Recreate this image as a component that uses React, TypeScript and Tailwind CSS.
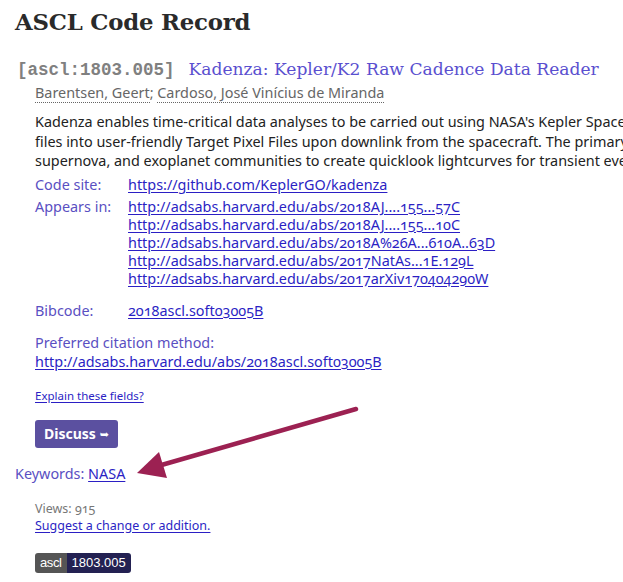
const LINKS = [
  'http://adsabs.harvard.edu/abs/2018AJ....155...57C',
  'http://adsabs.harvard.edu/abs/2018AJ....155...10C',
  'http://adsabs.harvard.edu/abs/2018A%26A...610A..63D',
  'http://adsabs.harvard.edu/abs/2017NatAs...1E.129L',
  'http://adsabs.harvard.edu/abs/2017arXiv170404290W',
];

const sans = "font-['Noto_Sans','DejaVu_Sans',sans-serif]";
const link = 'text-[#2b1fc4] underline underline-offset-2 oldstyle-nums';
const label = 'text-[#5a4fc2]';

export default function App() {
  return (
    <div className={`relative w-[623px] h-[582px] overflow-hidden bg-white ${sans} text-[14.4px] text-[#222]`}>
      <div className="pl-[15px] pt-[5px]">
        <h1 className="font-['DejaVu_Serif',serif] font-bold text-[22.8px] leading-[34px] text-[#2a2a2a] tracking-[-0.2px]">
          ASCL Code Record
        </h1>

        {/* record */}
        <div className="mt-[18px] flex items-baseline gap-[14px] pl-[2px] whitespace-nowrap">
          <span className="font-['Liberation_Mono',monospace] font-bold text-[17.5px] text-[#808080]">[ascl:1803.005]</span>
          <span className="font-['DejaVu_Serif',serif] text-[17.1px] text-[#5a4fcf]">Kadenza: Kepler/K2 Raw Cadence Data Reader</span>
        </div>

        <div className="pl-[20px]">
          <div className="mt-[1px] text-[#666] leading-[18px]">
            <span className="border-b border-dotted border-[#666]">Barentsen, Geert</span>;{' '}
            <span className="border-b border-dotted border-[#666]">Cardoso, José Vinícius de Miranda</span>
          </div>

          <p className="mt-[10px] leading-[19.5px] whitespace-nowrap">
            Kadenza enables time-critical data analyses to be carried out using NASA's Kepler Space Telescope. It enables users to convert Kepler/K2 raw cadence data
            <br />
            files into user-friendly Target Pixel Files upon downlink from the spacecraft. The primary motivation for this tool is to enable the microlensing,
            <br />
            supernova, and exoplanet communities to create quicklook lightcurves for transient events which require rapid follow-up.
          </p>

          <div className="mt-[5px] grid grid-cols-[93px_1fr] gap-y-[4px] leading-[18px]">
            <div className={label}>Code site:</div>
            <div><a className={link}>https://github.com/KeplerGO/kadenza</a></div>
            <div className={label}>Appears in:</div>
            <div className="flex flex-col">
              {LINKS.map((l) => (
                <a key={l} className={link}>{l}</a>
              ))}
            </div>
            <div className={`${label} mt-[10px]`}>Bibcode:</div>
            <div className="mt-[10px]"><a className={link}>2018ascl.soft03005B</a></div>
          </div>

          <div className="mt-[13px] leading-[19px]">
            <div className={label}>Preferred citation method:</div>
            <a className={link}>http://adsabs.harvard.edu/abs/2018ascl.soft03005B</a>
          </div>

          <div className="mt-[17px] text-[11.5px] leading-[16px]">
            <a className={link}>Explain these fields?</a>
          </div>

          <button className="mt-[16px] h-[28px] px-[9px] rounded-[3px] bg-[#5b50a0] text-white font-bold text-[14px] flex items-center gap-[4px]">
            Discuss <span className="text-[11px]">➥</span>
          </button>
        </div>

        <div className="mt-[16px] leading-[20px]">
          <span className={label}>Keywords:</span> <a className={link}>NASA</a>
        </div>

        <div className="pl-[20px] mt-[16px] text-[12.5px] leading-[17px]">
          <div className="text-[#777] oldstyle-nums">Views: 915</div>
          <div>
            <a className={link}>Suggest a change or addition.</a>
          </div>

          <div className="mt-[19px] inline-flex h-[20px] rounded-[3px] overflow-hidden font-['Liberation_Sans',sans-serif] text-[13px] text-white leading-[20px]">
            <span className="bg-[#555] px-[5px] tracking-[-0.4px]">ascl</span>
            <span className="bg-[#232152] px-[5px]">1803.005</span>
          </div>
        </div>
      </div>

      {/* annotation arrow */}
      <svg className="absolute left-0 top-0 pointer-events-none" width="623" height="582">
        <line x1="356" y1="409" x2="158" y2="466" stroke="#9c2152" strokeWidth="4.5" strokeLinecap="round" />
        <polygon points="137,473 159,452 167,478" fill="#9c2152" />
      </svg>
    </div>
  );
}
